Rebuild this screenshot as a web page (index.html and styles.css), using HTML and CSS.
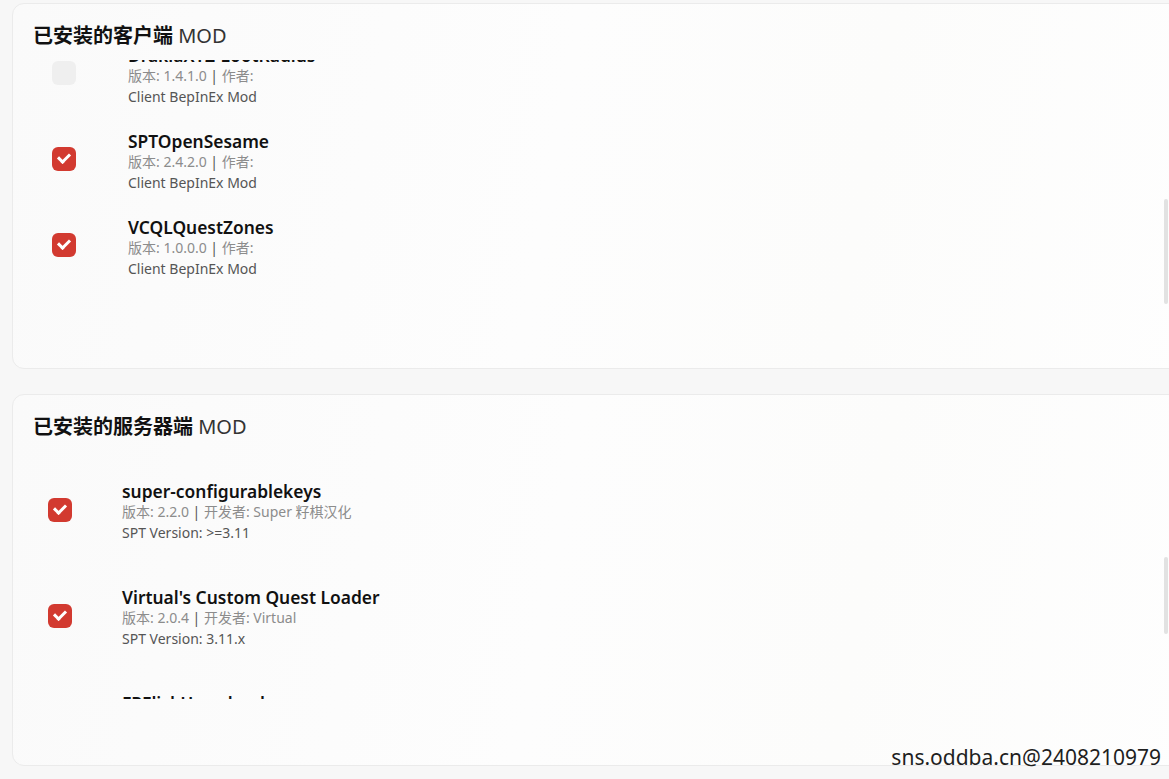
FILE: index.html
```html
<!DOCTYPE html>
<html lang="zh-CN">
<head>
  <meta charset="UTF-8">
  <title>MOD 管理</title>
  <link rel="stylesheet" href="styles.css">
</head>
<body>

  <div class="page">
    <section class="card card-client">
      <h2 class="card-title"><b>已安装的客户端</b> MOD</h2>
      <div class="mod-list">
        <ul class="mod-items">
          <li class="mod">
            <span class="check"></span>
            <div class="mod-info">
              <div class="mod-name">DrakiaXYZ-LootRadius</div>
              <div class="mod-meta">版本: 1.4.1.0 <i>|</i> 作者:</div>
              <div class="mod-type">Client BepInEx Mod</div>
            </div>
          </li>
          <li class="mod">
            <span class="check on"></span>
            <div class="mod-info">
              <div class="mod-name">SPTOpenSesame</div>
              <div class="mod-meta">版本: 2.4.2.0 <i>|</i> 作者:</div>
              <div class="mod-type">Client BepInEx Mod</div>
            </div>
          </li>
          <li class="mod">
            <span class="check on"></span>
            <div class="mod-info">
              <div class="mod-name">VCQLQuestZones</div>
              <div class="mod-meta">版本: 1.0.0.0 <i>|</i> 作者:</div>
              <div class="mod-type">Client BepInEx Mod</div>
            </div>
          </li>
        </ul>
        <div class="thumb"></div>
      </div>
    </section>

    <section class="card card-server">
      <h2 class="card-title"><b>已安装的服务器端</b> MOD</h2>
      <div class="mod-list">
        <ul class="mod-items">
          <li class="mod">
            <span class="check on"></span>
            <div class="mod-info">
              <div class="mod-name">super-configurablekeys</div>
              <div class="mod-meta">版本: 2.2.0 <i>|</i> 开发者: Super 籽棋汉化</div>
              <div class="mod-type">SPT Version: &gt;=3.11</div>
            </div>
          </li>
          <li class="mod">
            <span class="check on"></span>
            <div class="mod-info">
              <div class="mod-name">Virtual's Custom Quest Loader</div>
              <div class="mod-meta">版本: 2.0.4 <i>|</i> 开发者: Virtual</div>
              <div class="mod-type">SPT Version: 3.11.x</div>
            </div>
          </li>
          <li class="mod">
            <span class="check on"></span>
            <div class="mod-info">
              <div class="mod-name">FPFlickHarmlessly</div>
              <div class="mod-meta">版本: 1.0.0 <i>|</i> 开发者: FP</div>
              <div class="mod-type">SPT Version: 3.11.x</div>
            </div>
          </li>
        </ul>
        <div class="thumb"></div>
      </div>
    </section>
  </div>

  <div class="watermark">sns.oddba.cn@2408210979</div>

</body>
</html>
```
FILE: styles.css
```css
body {
  margin: 0;
  padding: 0;
  font-family: "Noto Sans", "Noto Sans CJK SC", sans-serif;
  background: #f7f7f7;
  color: #222;
  overflow: hidden;
  height: 100vh;
}
.page {
  padding: 3px 0 0 12px;
  width: 1200px;
  display: flex;
  flex-direction: column;
  gap: 25px;
}
.card {
  position: relative;
  background: linear-gradient(100deg, #fafafa 0%, #fdfdfd 45%, #fcfcfb 70%, #fefefe 100%);
  border: 1px solid #ebebeb;
  border-radius: 12px;
  padding: 18px 0 0 20px;
  box-sizing: border-box;
}
.card-client {
  height: 366px;
}
.card-server {
  height: 372px;
}
.card-title {
  margin: 0;
  font-size: 20px;
  line-height: 28px;
  font-weight: 400;
  color: #333;
}
.card-title b {
  font-weight: 700;
  color: #111;
}
.mod-list {
  overflow: hidden;
}
.card-client .mod-list {
  margin-top: 10px;
  height: 280px;
}
.card-client .mod-items {
  margin-top: -27px;
}
.card-server .mod-list {
  margin-top: 18px;
  height: 240px;
}
.mod-items {
  list-style-type: none;
  margin: 0;
  padding: 0;
}
.mod {
  display: flex;
  align-items: flex-start;
  padding: 12px 0 12px 19px;
}
.card-server .mod {
  padding: 22px 0 22px 15px;
}
.check {
  width: 24px;
  height: 24px;
  border-radius: 6px;
  background: #efefef;
  margin: 16px 52px 0 0;
  flex-shrink: 0;
  display: flex;
  align-items: center;
  justify-content: center;
}
.card-server .check {
  margin: 17px 50px 0 0;
}
.check.on {
  background: #d23a30;
}
.check.on::after {
  content: "";
  width: 9px;
  height: 5px;
  border-left: 3px solid #fff;
  border-bottom: 3px solid #fff;
  transform: translateY(-2px) rotate(-45deg);
}
.mod-name {
  font-size: 17.4px;
  line-height: 21px;
  font-weight: 600;
  color: #111;
}
.mod-meta {
  font-size: 14px;
  line-height: 20px;
  color: #8c8c8c;
}
.mod-meta i {
  font-style: normal;
  color: #555;
}
.mod-type {
  font-size: 14px;
  line-height: 21px;
  color: #555;
}
.thumb {
  position: absolute;
  left: 1151px;
  width: 4px;
  border-radius: 2px;
  background: #e2e2e2;
}
.card-client .thumb {
  top: 195px;
  height: 105px;
}
.card-server .thumb {
  top: 162px;
  height: 77px;
}
.watermark {
  position: absolute;
  right: 8px;
  bottom: 8px;
  font-family: "Noto Sans", sans-serif;
  font-size: 21px;
  color: #1f1f1f;
}
```
